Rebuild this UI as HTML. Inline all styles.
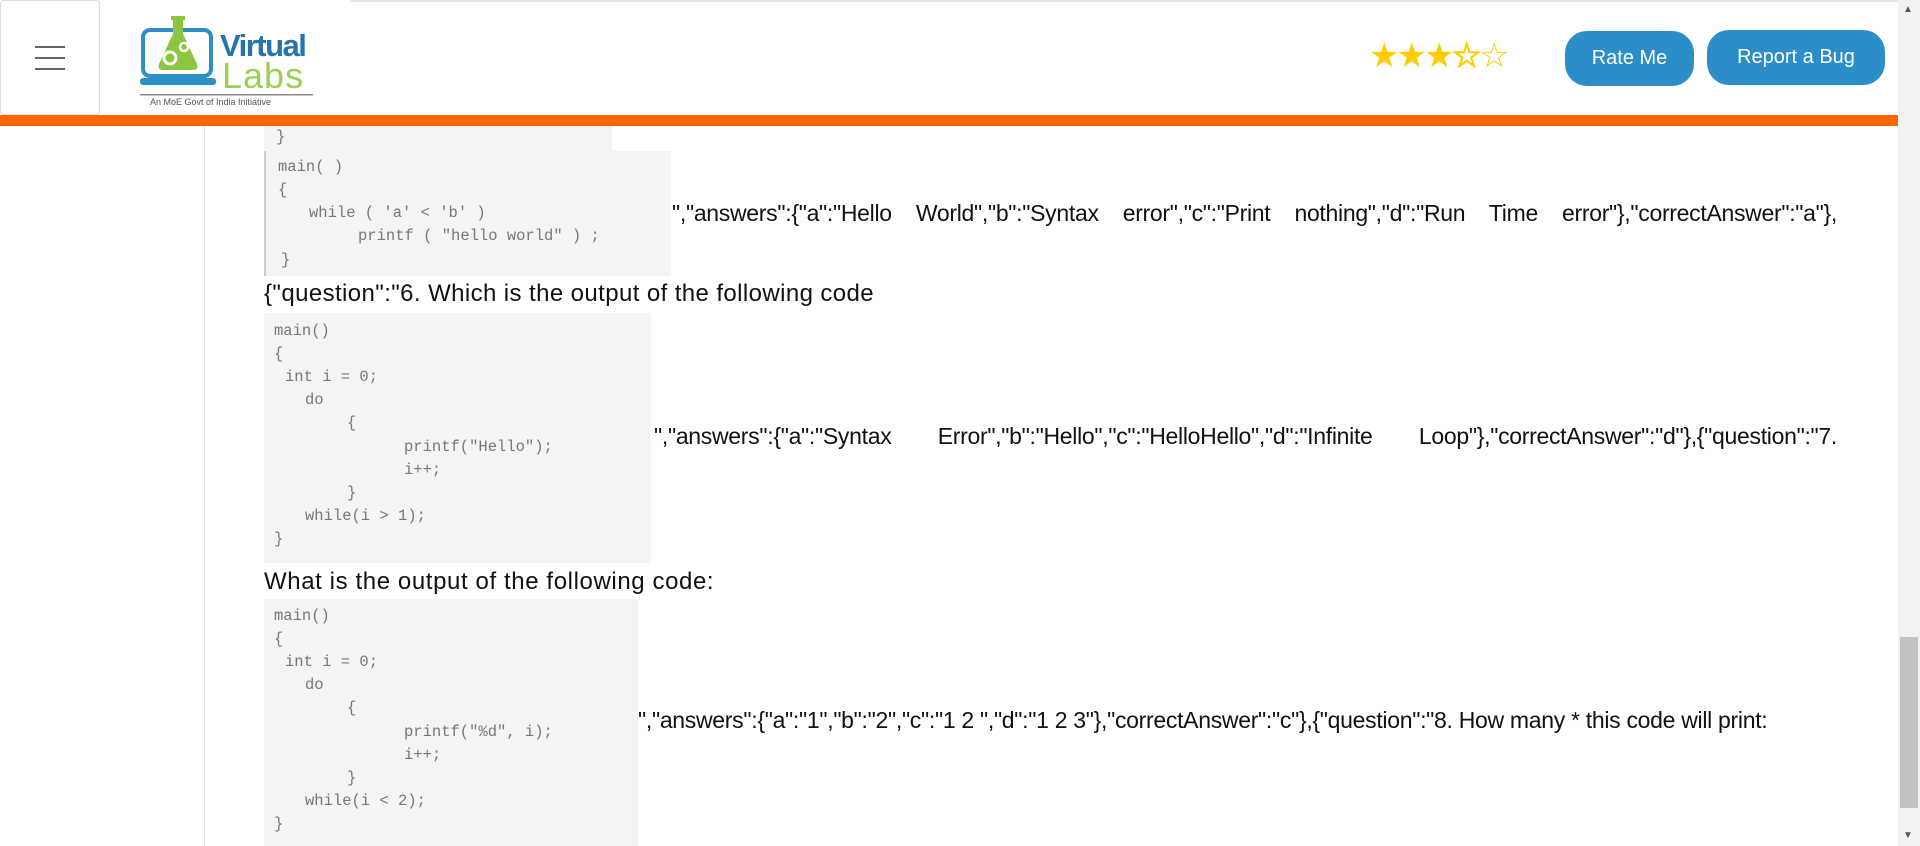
<!DOCTYPE html>
<html><head><meta charset="utf-8"><style>
*{margin:0;padding:0;box-sizing:border-box}
body{width:1920px;height:846px;overflow:hidden;background:#fff;position:relative;font-family:"Liberation Sans",sans-serif;color:#111}
.a{position:absolute;white-space:pre}
.code{position:absolute;background:#f4f4f4}
.c{position:absolute;white-space:pre;font-family:"Liberation Mono",monospace;font-size:15.5px;color:#777;line-height:18px}
.t{position:absolute;font-size:23px;line-height:28px;white-space:nowrap;letter-spacing:-0.3px}
.j{text-align:justify;text-align-last:justify;white-space:normal}
.btn{position:absolute;background:#2b8ec8;color:#fff;border-radius:22px;font-size:20px;text-align:center;line-height:55px}
</style></head><body>
<div style="position:absolute;left:0;top:0;width:100px;height:115px;border:1px solid #ddd;border-radius:4px"></div>
<div style="position:absolute;left:35px;top:46px;width:30px;height:2px;background:#666"></div>
<div style="position:absolute;left:35px;top:57px;width:30px;height:2px;background:#666"></div>
<div style="position:absolute;left:35px;top:68px;width:30px;height:2px;background:#666"></div>
<div style="position:absolute;left:350px;top:0;width:1548px;height:2px;background:#e6e6e6"></div>
<svg style="position:absolute;left:138px;top:12px" width="180" height="95" viewBox="0 0 180 95">
<rect x="5" y="18" width="68" height="46" rx="7" fill="none" stroke="#2e8fc8" stroke-width="4"/>
<rect x="2" y="66" width="76" height="7" rx="3" fill="#2e8fc8"/>
<path d="M33 4h14v4h-2v14l14 30q2 6-4 6H25q-6 0-4-6l14-30V8h-2z" fill="#8cc63f"/>
<circle cx="32" cy="46" r="6" fill="none" stroke="#fff" stroke-width="3"/>
<circle cx="46" cy="35" r="4" fill="none" stroke="#fff" stroke-width="2.5"/>
<text x="82" y="44" font-family="Liberation Sans" font-size="31" font-weight="bold" fill="#2573ad" letter-spacing="-1.5">Virtual</text>
<text x="84" y="76" font-family="Liberation Sans" font-size="36" fill="#9ccf55" letter-spacing="1">Labs</text>
<rect x="2" y="82" width="173" height="1.5" fill="#888"/>
<text x="12" y="93" font-family="Liberation Sans" font-size="9" fill="#555">An MoE Govt of India Initiative</text>
</svg>
<div class="a" style="left:1369px;top:36px;font-size:34px;color:#fc0;letter-spacing:-3px">★★★<span style="background:linear-gradient(90deg,#fc0 50%,#fff 50%);-webkit-background-clip:text;color:transparent;-webkit-text-stroke:1px #fc0">☆</span><span style="color:#fc0">☆</span></div>
<div class="btn" style="left:1565px;top:31px;width:129px">Rate Me</div>
<div class="btn" style="left:1707px;top:30px;width:178px">Report a Bug</div>
<div style="position:absolute;left:0;top:115px;width:1898px;height:11px;background:#f60"></div>
<div style="position:absolute;left:1898px;top:0;width:22px;height:846px;background:#f1f1f1"></div>
<div style="position:absolute;left:1900px;top:637px;width:18px;height:171px;background:#c1c1c1"></div>
<div class="a" style="left:1903px;top:4px;font-size:10px;color:#555">▲</div>
<div class="a" style="left:1903px;top:830px;font-size:10px;color:#555">▼</div>
<div style="position:absolute;left:204px;top:126px;width:1px;height:720px;background:#e8e8e8"></div>
<div class="code" style="left:264px;top:126px;width:348px;height:25px"></div>
<div class="c" style="left:276px;top:128px">}</div>
<div class="code" style="left:264px;top:151px;width:407px;height:125px;border-left:2px solid #ccc"></div>
<div class="c" style="left:278px;top:158px">main( )</div>
<div class="c" style="left:278px;top:181px">{</div>
<div class="c" style="left:309px;top:204px">while ( 'a' &lt; 'b' )</div>
<div class="c" style="left:358px;top:227px">printf ( "hello world" ) ;</div>
<div class="c" style="left:281px;top:251px">}</div>
<div class="t j" style="left:672px;top:199px;width:1165px">","answers":{"a":"Hello World","b":"Syntax error","c":"Print nothing","d":"Run Time error"},"correctAnswer":"a"},</div>
<div class="t" style="left:264px;top:280px;letter-spacing:0.4px;font-size:24px">{"question":"6. Which is the output of the following code</div>
<div class="code" style="left:264px;top:313px;width:387px;height:250px"></div>
<div class="c" style="left:274px;top:322px">main()</div>
<div class="c" style="left:274px;top:345px">{</div>
<div class="c" style="left:285px;top:368px">int i = 0;</div>
<div class="c" style="left:305px;top:391px">do</div>
<div class="c" style="left:347px;top:414px">{</div>
<div class="c" style="left:404px;top:438px">printf("Hello");</div>
<div class="c" style="left:404px;top:461px">i++;</div>
<div class="c" style="left:347px;top:484px">}</div>
<div class="c" style="left:305px;top:507px">while(i &gt; 1);</div>
<div class="c" style="left:274px;top:530px">}</div>
<div class="t j" style="left:654px;top:422px;width:1183px">","answers":{"a":"Syntax Error","b":"Hello","c":"HelloHello","d":"Infinite Loop"},"correctAnswer":"d"},{"question":"7.</div>
<div class="t" style="left:264px;top:568px;letter-spacing:0.6px;font-size:24px">What is the output of the following code:</div>
<div class="code" style="left:264px;top:599px;width:374px;height:247px"></div>
<div class="c" style="left:274px;top:607px">main()</div>
<div class="c" style="left:274px;top:630px">{</div>
<div class="c" style="left:285px;top:653px">int i = 0;</div>
<div class="c" style="left:305px;top:676px">do</div>
<div class="c" style="left:347px;top:699px">{</div>
<div class="c" style="left:404px;top:723px">printf("%d", i);</div>
<div class="c" style="left:404px;top:746px">i++;</div>
<div class="c" style="left:347px;top:769px">}</div>
<div class="c" style="left:305px;top:792px">while(i &lt; 2);</div>
<div class="c" style="left:274px;top:815px">}</div>
<div class="t" style="left:638px;top:706px">","answers":{"a":"1","b":"2","c":"1 2 ","d":"1 2 3"},"correctAnswer":"c"},{"question":"8. How many * this code will print:</div>
</body></html>
